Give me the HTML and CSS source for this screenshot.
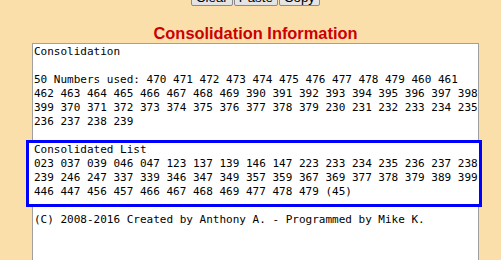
FILE: index.html
```html
<!DOCTYPE html>
<html lang="en">
  <head>
    <meta charset="UTF-8" />
    <meta name="viewport" content="width=device-width, initial-scale=1.0" />
    <title>Consolidation</title>
    <link rel="stylesheet" href="styles.css">
  </head>
  <body>
    <div class="page">
      <div class="toolbar">
        <button type="button">Clear</button>
        <button type="button">Paste</button>
        <button type="button">Copy</button>
      </div>

      <h2 class="title">Consolidation Information</h2>

      <div class="output">
        <div class="output-text">Consolidation

50 Numbers used: 470 471 472 473 474 475 476 477 478 479 460 461
462 463 464 465 466 467 468 469 390 391 392 393 394 395 396 397 398
399 370 371 372 373 374 375 376 377 378 379 230 231 232 233 234 235
236 237 238 239</div>
        <div class="highlight">Consolidated List
023 037 039 046 047 123 137 139 146 147 223 233 234 235 236 237 238
239 246 247 337 339 346 347 349 357 359 367 369 377 378 379 389 399
446 447 456 457 466 467 468 469 477 478 479 (45)</div>
        <div class="output-text">(C) 2008-2016 Created by Anthony A. - Programmed by Mike K.</div>
      </div>
    </div>
  </body>
</html>
```

FILE: styles.css
```css
html,
body {
  margin: 0;
  overflow: hidden;
  background-color: #fbdfaa;
}

.page {
  width: 447px;
  margin-left: 32px;
}

.toolbar {
  display: flex;
  justify-content: center;
  gap: 1px;
  margin-top: -16px;
}

.toolbar button {
  padding: 5px 4px 0;
  font-family: "Liberation Sans", Arial, sans-serif;
  font-size: 13.33px;
  line-height: 15px;
  color: #000;
  background: linear-gradient(#f2f2f2, #e2e2e2);
  border: 1px solid #8a8a8a;
  border-radius: 2px;
}

.title {
  margin: 17px 0 0;
  font-family: "Liberation Sans", Arial, sans-serif;
  font-size: 16.4px;
  line-height: 20px;
  font-weight: bold;
  color: #cc0000;
  text-align: center;
}

.output {
  height: 240px;
  padding: 1px;
  background-color: #fff;
  border: 1px solid #a0a0a0;
  font-family: "DejaVu Sans Mono", "Liberation Mono", monospace;
  font-size: 11px;
  line-height: 14px;
  color: #000;
}

.output-text {
  white-space: pre;
}

.highlight {
  white-space: pre;
  margin: 11px -5px 6px -8px;
  padding: 0 0 5px 5px;
  background-color: #fff;
  border: 3px solid #0000ff;
}
```
